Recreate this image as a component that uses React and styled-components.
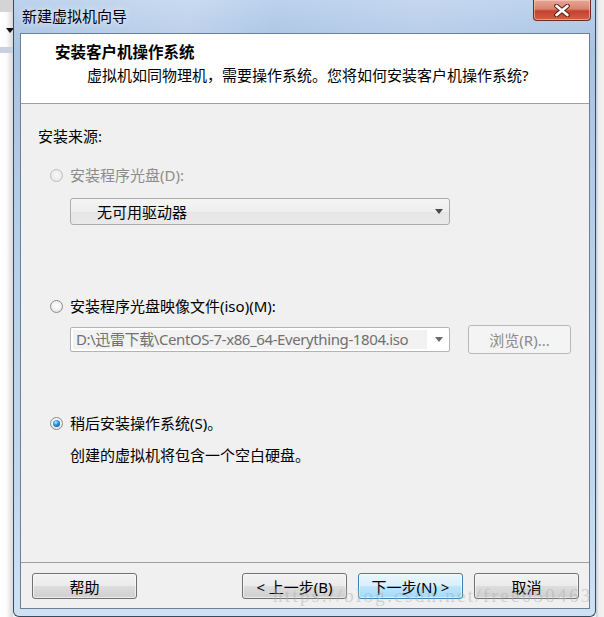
import React from 'react'
import styled, { createGlobalStyle, css } from 'styled-components'

const GlobalStyle = createGlobalStyle`
	html,
	body {
		margin: 0;
		padding: 0;
	}
	body {
		width: 604px;
		height: 617px;
		overflow: hidden;
		background: #f4f4f4;
		font-family: 'Noto Sans', 'Noto Sans CJK SC', sans-serif;
		font-size: 15px;
		color: #000;
	}
`

const Desktop = styled.div`
	position: relative;
	display: flex;
	width: 604px;
	height: 617px;
	overflow: hidden;
`

const LeftStrip = styled.div`
	flex: none;
	width: 13px;
	display: flex;
	flex-direction: column;
	background: linear-gradient(90deg, #ffffff 0%, #fbfbfb 50%, #d9d9d9 100%);
`

const StripBar = styled.div`
	height: ${p => p.h}px;
	margin-top: ${p => p.top || 0}px;
	background: ${p => p.color};
`

const StripArrow = styled.div`
	margin: 16px 0 0 6px;
	width: 0;
	height: 0;
	border-left: 4px solid transparent;
	border-right: 4px solid transparent;
	border-top: 5px solid #111;
`

const RightStrip = styled.div`
	flex: 1;
	background: linear-gradient(90deg, #c2cad4 0%, #eceef1 35%, #f3f3f3 100%);
`

const Window = styled.div`
	flex: none;
	width: 583px;
	height: 617px;
	box-sizing: border-box;
	display: flex;
	flex-direction: column;
	border: 1px solid #3a4a5e;
	border-top: none;
	border-radius: 0 0 6px 6px;
	background: linear-gradient(
		180deg,
		#bcd2ec 0%,
		#a9c3e3 8%,
		#b7cfe9 40%,
		#c3d8ef 80%,
		#cfe1f4 100%
	);
`

const TitleBar = styled.div`
	height: 33px;
	flex: none;
	display: flex;
	align-items: flex-start;
	justify-content: space-between;
	background: linear-gradient(
		100deg,
		rgba(255, 255, 255, 0) 0%,
		rgba(255, 255, 255, 0.18) 30%,
		rgba(255, 255, 255, 0) 45%,
		rgba(255, 255, 255, 0.12) 70%,
		rgba(255, 255, 255, 0) 100%
	);
`

const Title = styled.div`
	padding-left: 8px;
	line-height: 33px;
	font-size: 15px;
	color: #000;
	text-shadow: 0 0 6px rgba(255, 255, 255, 0.9);
`

const CloseButton = styled.div`
	width: 58px;
	height: 21px;
	margin-right: 4px;
	box-sizing: border-box;
	display: flex;
	align-items: center;
	justify-content: center;
	border: 1px solid #6b2b22;
	border-top: none;
	border-radius: 0 0 4px 4px;
	background: linear-gradient(
		180deg,
		#e8a696 0%,
		#d9836f 45%,
		#c4412e 55%,
		#d0604a 100%
	);
	box-shadow: inset 0 0 0 1px rgba(255, 220, 210, 0.5);
`

const Client = styled.div`
	flex: 1;
	margin: 0 5px 7px 6px;
	display: flex;
	flex-direction: column;
	border: 1px solid #6d7f96;
	background: #f0f0f0;
`

const Header = styled.div`
	height: 70px;
	flex: none;
	box-sizing: border-box;
	padding-top: 8px;
	background: #fff;
	border-bottom: 1px solid #a0a0a0;
`

const HeaderTitle = styled.div`
	padding-left: 34px;
	line-height: 20px;
	font-size: 15.5px;
	font-weight: bold;
`

const HeaderText = styled.div`
	margin-top: 3px;
	padding-left: 66px;
	line-height: 20px;
	font-size: 15px;
`

const Body = styled.div`
	flex: 1;
	display: flex;
	flex-direction: column;
	padding: 22px 0 0 17px;
`

const Label = styled.div`
	line-height: 20px;
	margin-top: ${p => p.$mt || 0}px;
	padding-left: ${p => p.$pl || 0}px;
	color: ${p => (p.$disabled ? '#8c8c8c' : '#000')};
`

const RadioRow = styled.label`
	display: flex;
	align-items: center;
	gap: 7px;
	height: 20px;
	margin-top: ${p => p.$mt}px;
	padding-left: 12px;
	line-height: 20px;
	color: ${p => (p.$disabled ? '#8c8c8c' : '#000')};
`

const RadioCircle = styled.span`
	position: relative;
	flex: none;
	width: 13px;
	height: 13px;
	box-sizing: border-box;
	border-radius: 50%;
	border: 1px solid ${p => (p.$disabled ? '#bdbdbd' : '#8a8c8e')};
	background: ${p =>
		p.$disabled
			? 'radial-gradient(circle at 50% 45%, #f7f7f7 0%, #ececec 60%, #dcdcdc 100%)'
			: 'radial-gradient(circle at 50% 40%, #ffffff 0%, #f2f2f2 50%, #d6d6d6 100%)'};
	${p =>
		p.$checked &&
		css`
			&::after {
				content: '';
				position: absolute;
				left: 2px;
				top: 2px;
				width: 7px;
				height: 7px;
				border-radius: 50%;
				background: radial-gradient(
					circle at 40% 35%,
					#bfeaff 0%,
					#3fa0e4 35%,
					#0e5aa8 75%,
					#0a3f78 100%
				);
			}
		`}
`

const Indented = styled.div`
	display: flex;
	align-items: center;
	margin-top: ${p => p.$mt}px;
	padding-left: 32px;
	gap: 18px;
`

const DriveSelect = styled.div`
	width: 380px;
	height: 27px;
	box-sizing: border-box;
	display: flex;
	align-items: center;
	justify-content: space-between;
	padding: 0 6px 0 26px;
	border: 1px solid #acacac;
	border-radius: 3px;
	background: linear-gradient(180deg, #f5f5f5 0%, #eeeeee 50%, #e6e6e6 51%, #e9e9e9 100%);
`

const IsoCombo = styled.div`
	width: 380px;
	height: 25px;
	box-sizing: border-box;
	display: flex;
	align-items: center;
	justify-content: space-between;
	padding: 0 6px 0 2px;
	border: 1px solid #b4b4b4;
	border-radius: 2px;
	background: #fff;
`

const IsoField = styled.div`
	width: 354px;
	height: 19px;
	padding-left: 3px;
	box-sizing: border-box;
	line-height: 19px;
	font-size: 15px;
	letter-spacing: -0.4px;
	color: #707070;
	white-space: nowrap;
	overflow: hidden;
	background: #f2f2f2;
`

const Arrow = styled.span`
	width: 0;
	height: 0;
	border-left: 4px solid transparent;
	border-right: 4px solid transparent;
	border-top: 5px solid ${p => (p.$light ? '#6a6a6a' : '#4a4a4a')};
`

const baseButton = css`
	height: 26px;
	box-sizing: border-box;
	display: flex;
	align-items: center;
	justify-content: center;
	border-radius: 3px;
	font-size: 15px;
	font-family: inherit;
`

const BrowseButton = styled.div`
	${baseButton};
	width: 103px;
	height: 29px;
	border: 1px solid #b5b9bc;
	background: #f4f4f4;
	color: #8a8a8a;
`

const Footer = styled.div`
	height: 46px;
	flex: none;
	box-sizing: border-box;
	display: flex;
	align-items: flex-start;
	padding: 10px 10px 0 11px;
	border-top: 1px solid #a0a0a0;
`

const Button = styled.div`
	${baseButton};
	width: 105px;
	margin-left: ${p => p.$ml || 0}px;
	border: 1px solid ${p => (p.$focused ? '#3c7fb1' : '#707070')};
	background: ${p =>
		p.$focused
			? 'linear-gradient(180deg, #eaf6fd 0%, #d9f0fc 50%, #bee6fd 51%, #a7d9f5 100%)'
			: 'linear-gradient(180deg, #f2f2f2 0%, #ebebeb 50%, #dddddd 51%, #cfcfcf 100%)'};
	box-shadow: inset 0 0 0 1px
		${p => (p.$focused ? 'rgba(255,255,255,0.7)' : 'rgba(255,255,255,0.6)')};
`

const Watermark = styled.div`
	position: absolute;
	left: 273px;
	top: 585px;
	font-family: 'Liberation Serif', serif;
	font-size: 19px;
	letter-spacing: 2.3px;
	color: rgba(175, 175, 175, 0.5);
	white-space: nowrap;
	pointer-events: none;
`

const Radio = ({ checked, disabled, mt, children }) => (
	<RadioRow $mt={mt} $disabled={disabled}>
		<RadioCircle $checked={checked} $disabled={disabled} />
		<span>{children}</span>
	</RadioRow>
)

const CloseGlyph = () => (
	<svg width="18" height="13" viewBox="0 0 18 13">
		<path
			d="M3.5 2 L14.5 11 M14.5 2 L3.5 11"
			stroke="#5a2018"
			strokeWidth="4.6"
			strokeLinecap="round"
		/>
		<path
			d="M3.5 2 L14.5 11 M14.5 2 L3.5 11"
			stroke="#ffffff"
			strokeWidth="2.6"
			strokeLinecap="round"
		/>
	</svg>
)

export default function App() {
	return (
		<>
			<GlobalStyle />
			<Desktop>
				<LeftStrip>
					<StripBar h={12} color="#d4d4d4" />
					<StripArrow />
					<StripBar h={6} top={14} color="#c8d2de" />
				</LeftStrip>
				<Window>
					<TitleBar>
						<Title>新建虚拟机向导</Title>
						<CloseButton>
							<CloseGlyph />
						</CloseButton>
					</TitleBar>
					<Client>
						<Header>
							<HeaderTitle>安装客户机操作系统</HeaderTitle>
							<HeaderText>
								虚拟机如同物理机，需要操作系统。您将如何安装客户机操作系统?
							</HeaderText>
						</Header>
						<Body>
							<Label>安装来源:</Label>
							<Radio disabled mt={19}>
								安装程序光盘(D):
							</Radio>
							<Indented $mt={13}>
								<DriveSelect>
									<span>无可用驱动器</span>
									<Arrow />
								</DriveSelect>
							</Indented>
							<Radio mt={71}>安装程序光盘映像文件(iso)(M):</Radio>
							<Indented $mt={9}>
								<IsoCombo>
									<IsoField>
										D:\迅雷下载\CentOS-7-x86_64-Everything-1804.iso
									</IsoField>
									<Arrow $light />
								</IsoCombo>
								<BrowseButton>浏览(R)...</BrowseButton>
							</Indented>
							<Radio checked mt={59}>
								稍后安装操作系统(S)。
							</Radio>
							<Label $mt={12} $pl={32}>
								创建的虚拟机将包含一个空白硬盘。
							</Label>
						</Body>
						<Footer>
							<Button>帮助</Button>
							<Button $ml={105}>&lt; 上一步(B)</Button>
							<Button $ml={11} $focused>
								下一步(N) &gt;
							</Button>
							<Button $ml={11}>取消</Button>
						</Footer>
					</Client>
				</Window>
				<RightStrip />
				<Watermark>https://blog.csdn.net/free050463</Watermark>
			</Desktop>
		</>
	)
}
